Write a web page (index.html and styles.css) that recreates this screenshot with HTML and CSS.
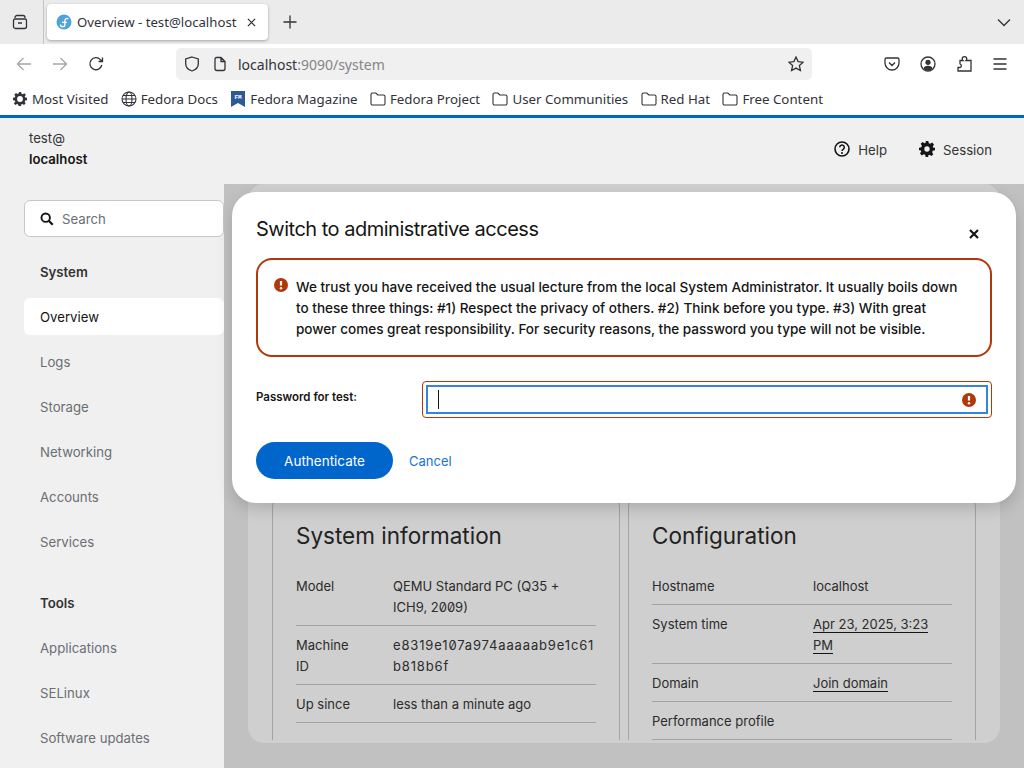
FILE: index.html
```html
<!doctype html>
<html>
<head>
  <meta charset="utf-8">
  <title>Overview - test@localhost</title>
  <link rel="stylesheet" href="styles.css">
</head>
<body>
  <div class="tabbar">
    <div class="tab-side">
      <svg class="ico" viewBox="0 0 16 16"><path d="M3 4v-.5a2 2 0 0 1 2-2h6a2 2 0 0 1 2 2V4M1.500 6.500a1.500 1.500 0 0 1 1.500-1.500h10a1.500 1.500 0 0 1 1.500 1.500v6a2 2 0 0 1-2 2h-9a2 2 0 0 1-2-2zM6 9h4"/></svg>
    </div>
    <div class="tab">
      <svg class="tab-logo" viewBox="0 0 16 16"><circle cx="8" cy="8" r="7.500" fill="#51a2da"/><path d="M4.500 10.500a2.200 2.200 0 0 0 4.400 0V6.300a2 2 0 0 1 3.400-1.300M6 8.300h4.800" fill="none" stroke="#fff" stroke-width="1.300"/></svg>
      <span class="tab-title">Overview - test@localhost</span>
      <svg class="tab-close" viewBox="0 0 10 10"><path d="M1 1l8 8M9 1l-8 8"/></svg>
    </div>
    <svg class="ico tab-new" viewBox="0 0 16 16"><path d="M8 1.500v13M1.500 8h13"/></svg>
    <svg class="ico tab-list" viewBox="0 0 16 16"><path d="M2 5.500l6 6 6-6"/></svg>
  </div>

  <div class="navbar">
    <svg class="ico faded" viewBox="0 0 16 16"><path d="M15 8H1.500M7.500 2l-6 6 6 6"/></svg>
    <svg class="ico faded" viewBox="0 0 16 16"><path d="M1 8h13.500M8.500 2l6 6-6 6"/></svg>
    <svg class="ico" viewBox="0 0 16 16"><path d="M13.800 9a6 6 0 1 1-1.300-5.200L14 5.300M14.500 1.500v4h-4"/></svg>
    <div class="urlbar">
      <svg class="ico" viewBox="0 0 16 16"><path d="M8 1l6.300 2v5c0 3.500-2.800 5.800-6.300 7-3.500-1.200-6.300-3.500-6.300-7V3z"/></svg>
      <svg class="ico" viewBox="0 0 16 16"><path d="M3 3a1.500 1.500 0 0 1 1.500-1.500h4.500L13 5.500v7a2 2 0 0 1-2 2H5a2 2 0 0 1-2-2zM9 1.500v4h4"/></svg>
      <span class="url">localhost<span class="url-rest">:9090/system</span></span>
      <svg class="ico url-star" viewBox="0 0 16 16"><path d="M8 1l2.100 4.600 5 .6-3.700 3.400 1 5L8 12.100l-4.400 2.500 1-5L.9 6.200l5-.6z"/></svg>
    </div>
    <div class="nav-tools">
      <svg class="ico" viewBox="0 0 16 16"><path d="M2.500 2h11A1.500 1.500 0 0 1 15 3.500V7a7 7 0 0 1-14 0V3.500A1.500 1.500 0 0 1 2.500 2zM5 6.500l3 3 3-3"/></svg>
      <svg class="ico" viewBox="0 0 16 16"><circle cx="8" cy="8" r="7"/><circle class="solid" cx="8" cy="6.300" r="2.600"/><path class="solid" d="M3.500 12.500c.5-2 2-2.800 4.500-2.800s4 .8 4.500 2.800A7 7 0 0 1 8 14.500a7 7 0 0 1-4.500-2z"/></svg>
      <svg class="ico" viewBox="0 0 16 16"><path d="M4 4.500h3c-.6-.6-.8-1-.8-1.500a2.300 2.300 0 0 1 4.600 0c0 .5-.2.900-.8 1.500H15v10.500H2v-3.500h1.700a1.700 1.700 0 0 0 0-3.400H4z"/></svg>
      <svg class="ico" viewBox="0 0 16 16"><path d="M1.500 3h13M1.500 8h13M1.500 13h13"/></svg>
    </div>
  </div>

  <div class="bookmarks">
    <div class="bm"><svg class="bm-ico gear" viewBox="0 0 24 24"><path class="solid" fill-rule="evenodd" d="M10 1h4l.6 3 2.200 1 2.600-1.700 2.800 2.800L20 8.200l1 2.200 3 .6v4l-3 .6-1 2.200 1.700 2.600-2.800 2.800-2.600-1.700-2.200 1-.6 3h-4l-.6-3-2.200-1-2.600 1.700-2.800-2.800L4 17.800l-1-2.200-3-.6v-4l3-.6 1-2.200L2.300 5.600l2.800-2.800L7.700 4.500l2.200-1zM12 8a5 5 0 1 0 0 10 5 5 0 0 0 0-10z" transform="translate(0 -1)"/></svg>Most Visited</div>
    <div class="bm"><svg class="bm-ico thin" viewBox="0 0 16 16"><circle cx="8" cy="8" r="7"/><ellipse cx="8" cy="8" rx="3" ry="7"/><path d="M1 8h14M2 4.500h12M2 11.500h12"/></svg>Fedora Docs</div>
    <div class="bm"><svg class="bm-ico" viewBox="0 0 16 16"><path d="M1 0h14v16l-7-4-7 4z" fill="#2b5b94"/><text class="fm" x="8" y="7.500">FM</text></svg>Fedora Magazine</div>
    <div class="bm"><svg class="bm-ico thin" viewBox="0 0 16 16"><path d="M1 3.500A1.500 1.500 0 0 1 2.500 2h3.300l2 2h5.700A1.500 1.500 0 0 1 15 5.500v7a1.500 1.500 0 0 1-1.500 1.500h-11A1.500 1.500 0 0 1 1 12.500z"/></svg>Fedora Project</div>
    <div class="bm"><svg class="bm-ico thin" viewBox="0 0 16 16"><path d="M1 3.500A1.500 1.500 0 0 1 2.500 2h3.300l2 2h5.700A1.500 1.500 0 0 1 15 5.500v7a1.500 1.500 0 0 1-1.500 1.500h-11A1.500 1.500 0 0 1 1 12.500z"/></svg>User Communities</div>
    <div class="bm"><svg class="bm-ico thin" viewBox="0 0 16 16"><path d="M1 3.500A1.500 1.500 0 0 1 2.500 2h3.300l2 2h5.700A1.500 1.500 0 0 1 15 5.500v7a1.500 1.500 0 0 1-1.500 1.500h-11A1.500 1.500 0 0 1 1 12.500z"/></svg>Red Hat</div>
    <div class="bm"><svg class="bm-ico thin" viewBox="0 0 16 16"><path d="M1 3.500A1.500 1.500 0 0 1 2.500 2h3.300l2 2h5.700A1.500 1.500 0 0 1 15 5.500v7a1.500 1.500 0 0 1-1.500 1.500h-11A1.500 1.500 0 0 1 1 12.500z"/></svg>Free Content</div>
  </div>

  <div class="cockpit">
    <div class="topbar">
      <div class="host">
        <div class="host-user">test@</div>
        <div class="host-name">localhost</div>
      </div>
      <div class="top-actions">
        <div class="top-btn">
          <svg class="top-ico" viewBox="0 0 16 16"><circle cx="8" cy="8" r="7" fill="none" stroke="#151515" stroke-width="1.600"/><path d="M5.700 6.300a2.300 2.300 0 1 1 3.500 2c-.8.500-1.200.8-1.200 1.700" fill="none" stroke="#151515" stroke-width="1.500"/><circle cx="8" cy="12" r="1" fill="#151515"/></svg>
          Help
        </div>
        <div class="top-btn">
          <svg class="top-ico" viewBox="0 0 24 24"><path fill="#151515" fill-rule="evenodd" d="M10 0h4l.7 3.300 2.100.9 2.900-1.800 2.800 2.800-1.800 2.900.9 2.100L24 10v4l-3.400.8-.9 2.100 1.800 2.900-2.800 2.800-2.900-1.800-2.100.9L14 24h-4l-.7-3.300-2.100-.9-2.900 1.800-2.800-2.800 1.800-2.900-.9-2.100L0 14v-4l3.400-.8.900-2.100-1.800-2.900 2.800-2.800 2.900 1.800 2.100-.9zM12 8a4 4 0 1 0 0 8 4 4 0 0 0 0-8z"/></svg>
          Session
        </div>
      </div>
    </div>

    <div class="workspace">
      <nav class="sidebar">
        <div class="search">
          <svg class="search-ico" viewBox="0 0 16 16"><circle cx="6.500" cy="6.500" r="4.800" fill="none" stroke="#151515" stroke-width="2.200"/><path d="M10 10l4.500 4.500" stroke="#151515" stroke-width="2.600"/></svg>
          Search
        </div>
        <div class="nav-group">
          <div class="nav-head">System</div>
          <div class="nav-item current">Overview</div>
          <div class="nav-item">Logs</div>
          <div class="nav-item">Storage</div>
          <div class="nav-item">Networking</div>
          <div class="nav-item">Accounts</div>
          <div class="nav-item">Services</div>
        </div>
        <div class="nav-group">
          <div class="nav-head">Tools</div>
          <div class="nav-item">Applications</div>
          <div class="nav-item">SELinux</div>
          <div class="nav-item">Software updates</div>
        </div>
      </nav>

      <main class="page">
        <div class="panel">
          <section class="card">
            <h2>System information</h2>
            <dl class="rows sysinfo">
              <dt>Model</dt><dd class="zero">QEMU Standard PC (Q35 + ICH9, 2009)</dd>
              <dt>Machine ID</dt><dd class="machine-id zero">e8319e107a974aaaaab9e1c61b818b6f</dd>
              <dt>Up since</dt><dd>less than a minute ago</dd>
            </dl>
          </section>
          <section class="card">
            <h2>Configuration</h2>
            <dl class="rows config">
              <dt>Hostname</dt><dd>localhost</dd>
              <dt>System time</dt><dd><a>Apr 23, 2025, 3:23 PM</a></dd>
              <dt>Domain</dt><dd><a>Join domain</a></dd>
              <dt>Performance profile</dt><dd></dd>
            </dl>
          </section>
        </div>
      </main>

      <div class="modal">
        <div class="modal-head">
          <h1>Switch to administrative access</h1>
          <svg class="modal-close" viewBox="0 0 10 10"><path d="M1 1l8 8M9 1l-8 8"/></svg>
        </div>
        <div class="alert">
          <svg class="danger-ico" viewBox="0 0 14 14"><circle cx="7" cy="7" r="7" fill="#b1380b"/><path d="M7 3v4.500" stroke="#fff" stroke-width="2.200"/><circle cx="7" cy="10.300" r="1.200" fill="#fff"/></svg>
          <p>We trust you have received the usual lecture from the local System Administrator. It usually boils down to these three things: #1) Respect the privacy of others. #2) Think before you type. #3) With great power comes great responsibility. For security reasons, the password you type will not be visible.</p>
        </div>
        <div class="field">
          <label>Password for test:</label>
          <div class="input-wrap">
            <div class="input">
              <span class="caret"></span>
              <svg class="danger-ico" viewBox="0 0 14 14"><circle cx="7" cy="7" r="7" fill="#b1380b"/><path d="M7 3v4.500" stroke="#fff" stroke-width="2.200"/><circle cx="7" cy="10.300" r="1.200" fill="#fff"/></svg>
            </div>
          </div>
        </div>
        <div class="modal-foot">
          <button class="btn-primary">Authenticate</button>
          <button class="btn-link">Cancel</button>
        </div>
      </div>
    </div>
  </div>
</body>
</html>
```

FILE: styles.css
```css
* {
  box-sizing: border-box;
}

html, body {
  margin: 0;
  height: 768px;
  overflow: hidden;
}

body {
  display: flex;
  flex-direction: column;
  font-family: "Noto Sans", sans-serif;
  color: #2b2a33;
  background: #fff;
}

/* browser chrome */
.ico {
  width: 16px;
  height: 16px;
  flex: none;
  fill: none;
  stroke: #33323a;
  stroke-width: 1.300;
}
.ico .solid {
  fill: #33323a;
  stroke: none;
}
.faded {
  stroke: #a5a5aa;
}

.tabbar {
  height: 44px;
  background: #ebebeb;
  display: flex;
  align-items: center;
}
.tab-side {
  width: 44px;
  height: 44px;
  border-right: 1px solid #c4c4c4;
  padding-left: 12px;
  display: flex;
  align-items: center;
}
.tab {
  width: 221px;
  height: 36px;
  margin-left: 3px;
  padding: 0 9px;
  background: #fff;
  border-radius: 4px;
  box-shadow: 0 1px 3px rgba(0,0,0,.3);
  display: flex;
  align-items: center;
}
.tab-logo {
  width: 16px;
  height: 16px;
  flex: none;
}
.tab-title {
  margin-left: 5px;
  font-size: 13.200px;
  white-space: nowrap;
  color: #33323a;
}
.tab-close {
  width: 9px;
  height: 9px;
  margin-left: 11px;
  fill: none;
  stroke: #33323a;
  stroke-width: 1.400;
  flex: none;
}
.tab-new {
  margin-left: 14px;
}
.tab-list {
  margin-left: auto;
  margin-right: 12px;
}

.navbar {
  height: 40px;
  display: flex;
  align-items: center;
  padding-left: 16px;
  gap: 20px;
}
.urlbar {
  width: 636px;
  height: 32px;
  margin-left: 52px;
  background: #f0f0f0;
  border-radius: 5px;
  display: flex;
  align-items: center;
  padding: 0 8px;
  gap: 12px;
}
.url {
  font-size: 14px;
  margin-left: -2px;
  color: #33323a;
}
.url-rest {
  color: #85858a;
}
.url-star {
  margin-left: auto;
}
.nav-tools {
  display: flex;
  gap: 20px;
  margin-left: 52px;
}

.bookmarks {
  height: 31px;
  display: flex;
  align-items: center;
  padding: 0 0 2px 12px;
  gap: 12.300px;
  font-size: 13.300px;
  color: #33323a;
}
.bm {
  display: flex;
  align-items: center;
  gap: 4px;
  white-space: nowrap;
}
.bm-ico {
  width: 16px;
  height: 16px;
  flex: none;
}
.bm-ico .solid {
  fill: #33323a;
}
.gear {
  width: 14px;
  height: 14px;
  margin: 0 1px;
}
.fm {
  font-family: "Liberation Mono", monospace;
  font-size: 6px;
  font-weight: 700;
  fill: #fff;
  text-anchor: middle;
}
.thin {
  fill: none;
  stroke: #33323a;
  stroke-width: 1.100;
}

/* cockpit shell */
.cockpit {
  flex: 1;
  min-height: 0;
  display: flex;
  flex-direction: column;
  border-top: 3px solid #0066cc;
  background: #f0f0f0;
  font-family: "Inter", sans-serif;
  font-size: 13.200px;
  color: #151515;
}

.topbar {
  height: 66px;
  flex: none;
  display: flex;
  justify-content: space-between;
  align-items: center;
  padding: 0 32px 5px 29px;
}
.host-user {
  color: #333;
  margin-bottom: 5px;
}
.host-name {
  font-weight: 600;
}
.top-actions {
  display: flex;
  gap: 32px;
  padding-top: 2px;
}
.top-btn {
  display: flex;
  align-items: center;
  gap: 8px;
  color: #333;
}
.top-ico {
  width: 16px;
  height: 16px;
  margin-top: -2px;
}

.workspace {
  flex: 1;
  min-height: 0;
  display: flex;
  position: relative;
}

.sidebar {
  width: 224px;
  flex: none;
  padding: 16px 0 0 24px;
  overflow: hidden;
}
.search {
  height: 37px;
  background: #fff;
  border: 1px solid #c7c7c7;
  border-radius: 6px;
  display: flex;
  align-items: center;
  padding-left: 15px;
  gap: 8px;
  color: #6a6e73;
}
.search-ico {
  width: 14px;
  height: 14px;
}
.nav-group {
  margin-top: 16px;
  display: flex;
  flex-direction: column;
  gap: 8px;
}
.nav-group + .nav-group {
  margin-top: 24px;
}
.nav-head, .nav-item {
  height: 37px;
  flex: none;
  padding-left: 16px;
  display: flex;
  align-items: center;
  border-radius: 6px;
}
.nav-head {
  font-weight: 600;
  color: #333;
}
.nav-item {
  color: #6a6e73;
}
.nav-item.current {
  background: #fff;
  color: #151515;
}

/* dimmed page behind the dialog */
.page {
  flex: 1;
  min-width: 0;
  background: #c1c1c1;
  padding: 0 24px 25px;
}
.panel {
  height: 100%;
  background: #cfcfcf;
  border-radius: 16px;
  padding: 308px 24px 0;
  display: grid;
  grid-template-columns: 348px 348px;
  gap: 8px;
  overflow: hidden;
}
.card {
  height: 248px;
  border: 1px solid #a3a3a3;
  border-bottom: 0;
  border-radius: 16px 16px 0 0;
  padding: 0 23px;
}
.card h2 {
  margin: 26px 0 23px;
  font-family: "Inter", sans-serif;
  font-size: 22.500px;
  line-height: 34px;
  font-weight: 400;
  color: #222;
}
.rows {
  margin: 0;
  display: grid;
  font-size: 13px;
  line-height: 21px;
  color: #2b2b2b;
}
.sysinfo {
  grid-template-columns: 97px 203px;
}
.config {
  grid-template-columns: 161px 139px;
}
.rows dt, .rows dd {
  margin: 0 0 9px;
  padding: 0 0 7px;
  border-bottom: 1px solid #a3a3a3;
}
.sysinfo dt {
  padding-right: 34px;
}
.config dd {
  padding-right: 12px;
}
.rows a {
  border-bottom: 1px solid #151515;
}
.machine-id {
  overflow-wrap: anywhere;
  letter-spacing: .85px;
}
.zero {
  font-feature-settings: "zero";
}

/* dialog */
.modal {
  position: absolute;
  left: 232px;
  top: 8px;
  width: 784px;
  height: 311px;
  background: #fff;
  border-radius: 24px;
  padding: 24px;
  box-shadow: 0 6px 16px rgba(0,0,0,.16);
}
.modal-head {
  display: flex;
  justify-content: space-between;
  align-items: flex-start;
}
.modal-head h1 {
  margin: 0;
  font-family: "Inter", sans-serif;
  font-size: 20px;
  line-height: 26px;
  letter-spacing: -.5px;
  font-weight: 400;
  color: #151515;
}
.modal-close {
  width: 10px;
  height: 10px;
  margin: 13px 13px 0 0;
  fill: none;
  stroke: #151515;
  stroke-width: 2.200;
}
.alert {
  margin-top: 16px;
  height: 99px;
  border: 2px solid #b1380b;
  border-radius: 16px;
  display: flex;
  gap: 8px;
  padding: 17px 16px 0;
}
.danger-ico {
  width: 14px;
  height: 14px;
  flex: none;
  margin-top: 1px;
}
.alert p {
  margin: 0;
  padding-right: 6px;
  font-size: 13.550px;
  line-height: 21px;
  font-weight: 500;
  color: #151515;
}
.field {
  margin-top: 24px;
  display: flex;
  align-items: center;
}
.field label {
  width: 166px;
  flex: none;
  margin-bottom: 5px;
  font-size: 11.500px;
  font-weight: 600;
  color: #151515;
}
.input-wrap {
  flex: 1;
  height: 37px;
  border: 1px solid #b1380b;
  border-radius: 4px;
  padding: 3px;
}
.input {
  height: 100%;
  border: 2px solid #3584e4;
  display: flex;
  align-items: center;
  justify-content: space-between;
  padding: 0 10px;
}
.input .danger-ico {
  margin-top: 0;
}
.caret {
  width: 1px;
  height: 19px;
  background: #151515;
}
.modal-foot {
  margin-top: 24px;
  display: flex;
  align-items: center;
  gap: 16px;
}
.btn-primary {
  width: 137px;
  height: 37px;
  border: 0;
  border-radius: 19px;
  background: #0066cc;
  color: #fff;
  font: 13.500px "Inter", sans-serif;
}
.btn-link {
  padding: 0;
  border: 0;
  background: none;
  color: #1873d3;
  font: 13px "Inter", sans-serif;
}
```
